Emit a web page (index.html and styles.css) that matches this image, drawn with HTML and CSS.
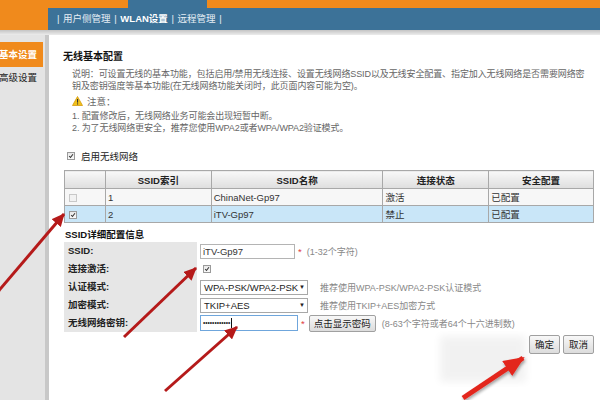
FILE: index.html
```
<!DOCTYPE html>
<html lang="zh-CN">

<head>
    <meta charset="UTF-8">
    <title>WLAN设置</title>
    <link rel="stylesheet" href="styles.css">
</head>

<body>
    <div class="header">
        <div class="logo"></div>
        <div class="nav">
            <div class="nav-top">
                <div class="strip first"></div>
                <div class="tab"></div>
                <div class="strip"></div>
            </div>
            <div class="nav-bar">
                | 用户侧管理 | <b>WLAN设置</b> | 远程管理 |
            </div>
        </div>
    </div>
    <div class="shade"></div>

    <div class="main">
        <ul class="sidebar">
            <li class="active"><span>无线基本设置</span></li>
            <li><span>无线高级设置</span></li>
        </ul>

        <div class="content">
            <h3 class="title">无线基本配置</h3>
            <p class="desc">说明：可设置无线的基本功能，包括启用/禁用无线连接、设置无线网络SSID以及无线安全配置、指定加入无线网络是否需要网络密<br>钥及密钥强度等基本功能(在无线网络功能关闭时，此页面内容可能为空)。</p>
            <div class="notice">
                <svg width="11" height="10" viewBox="0 0 11 10">
                    <path d="M5.5 0.5 L10.5 9.5 L0.5 9.5 Z" fill="#f2c21b" stroke="#d49a10" stroke-width="0.8"/>
                    <rect x="5" y="3" width="1.1" height="3.6" fill="#333"/>
                    <rect x="5" y="7.4" width="1.1" height="1.1" fill="#333"/>
                </svg>
                注意：
            </div>
            <p class="desc">1. 配置修改后，无线网络业务可能会出现短暂中断。<br>2. 为了无线网络更安全，推荐您使用WPA2或者WPA/WPA2验证模式。</p>

            <div class="enable">
                <span class="cb checked"><svg viewBox="0 0 8 8"><path d="M1.5 4 L3.3 6 L6.6 1.6" fill="none" stroke="#333" stroke-width="1.4"/></svg></span>
                启用无线网络
            </div>

            <table class="list">
                <tr>
                    <th class="c0"></th>
                    <th class="c1">SSID索引</th>
                    <th class="c2">SSID名称</th>
                    <th class="c3">连接状态</th>
                    <th class="c4">安全配置</th>
                </tr>
                <tr class="row">
                    <td class="chk"><span class="cb off"></span></td>
                    <td>1</td>
                    <td>ChinaNet-Gp97</td>
                    <td>激活</td>
                    <td>已配置</td>
                </tr>
                <tr class="row sel">
                    <td class="chk"><span class="cb checked"><svg viewBox="0 0 8 8"><path d="M1.5 4 L3.3 6 L6.6 1.6" fill="none" stroke="#333" stroke-width="1.4"/></svg></span></td>
                    <td>2</td>
                    <td>iTV-Gp97</td>
                    <td>禁止</td>
                    <td>已配置</td>
                </tr>
            </table>

            <h4 class="subtitle">SSID详细配置信息</h4>
            <div class="form">
                <div class="label">SSID:</div>
                <div class="value">
                    <span class="input">iTV-Gp97</span><span class="req">*</span><span class="hint">(1-32个字符)</span>
                </div>
                <div class="label">连接激活:</div>
                <div class="value">
                    <span class="cb checked"><svg viewBox="0 0 8 8"><path d="M1.5 4 L3.3 6 L6.6 1.6" fill="none" stroke="#333" stroke-width="1.4"/></svg></span>
                </div>
                <div class="label">认证模式:</div>
                <div class="value">
                    <span class="select">WPA-PSK/WPA2-PSK<i>▼</i></span><span class="hint wide">推荐使用WPA-PSK/WPA2-PSK认证模式</span>
                </div>
                <div class="label">加密模式:</div>
                <div class="value">
                    <span class="select">TKIP+AES<i>▼</i></span><span class="hint wide">推荐使用TKIP+AES加密方式</span>
                </div>
                <div class="label">无线网络密钥:</div>
                <div class="value">
                    <span class="input pwd">••••••••••••<em></em></span><span class="req">*</span><span class="btn">点击显示密码</span><span class="hint">(8-63个字符或者64个十六进制数)</span>
                </div>
            </div>

            <div class="actions">
                <span class="btn">确定</span>
                <span class="btn">取消</span>
            </div>
        </div>
    </div>

    <!-- 标注箭头 -->
    <svg class="marks" width="600" height="400" viewBox="0 0 600 400">
        <defs>
            <marker id="head" markerUnits="userSpaceOnUse" markerWidth="14" markerHeight="12" refX="12" refY="6" orient="auto">
                <path d="M0 0 L13 6 L0 12 Z" fill="#b51a1a"/>
            </marker>
            <marker id="head2" markerUnits="userSpaceOnUse" markerWidth="22" markerHeight="18" refX="19" refY="9" orient="auto">
                <path d="M0 0 L21 9 L0 18 Z" fill="#e3261f"/>
            </marker>
            <filter id="blur"><feGaussianBlur stdDeviation="4"/></filter>
            <filter id="sh"><feDropShadow dx="1" dy="2" stdDeviation="1.5" flood-opacity="0.35"/></filter>
        </defs>
        <rect x="440" y="336" width="86" height="46" fill="#000" opacity="0.05" filter="url(#blur)"/>
        <line x1="-4" y1="294" x2="64" y2="214" stroke="#b51a1a" stroke-width="3" marker-end="url(#head)"/>
        <line x1="124" y1="337" x2="196" y2="268" stroke="#b51a1a" stroke-width="3" marker-end="url(#head)"/>
        <line x1="165" y1="391" x2="237" y2="327" stroke="#b51a1a" stroke-width="3" marker-end="url(#head)"/>
        <line x1="463" y1="398" x2="523" y2="358" stroke="#e3261f" stroke-width="5" marker-end="url(#head2)" filter="url(#sh)"/>
    </svg>
</body>

</html>
```

FILE: styles.css
```
* {
    margin: 0;
    padding: 0;
    list-style-type: none;
    box-sizing: border-box;
}

body {
    width: 600px;
    height: 400px;
    overflow: hidden;
    position: relative;
    background: #fff;
    font-family: "Liberation Sans", "Noto Sans CJK SC", sans-serif;
    font-size: 9.5px;
    color: #333;
}

.header {
    display: flex;
    height: 30px;
    background: #f08a1c;
}

.logo {
    width: 48px;
}

.nav {
    flex: 1;
    display: flex;
    flex-direction: column;
}

.nav-top {
    display: flex;
    height: 8px;
}

.nav-top .strip {
    flex: 1;
    background: #f08a1c;
}

.nav-top .strip.first {
    flex: none;
    width: 80px;
}

.nav-top .tab {
    width: 79px;
    background: #3c7298;
}

.nav-bar {
    flex: 1;
    background: #3c7298;
    color: #e6eef5;
    padding-left: 9px;
    line-height: 22px;
    font-size: 9.5px;
    word-spacing: 1px;
}

.nav-bar b {
    color: #fff;
}

.shade {
    height: 5px;
    background: linear-gradient(#c4c4c4, #ececec);
}

.main {
    display: flex;
    height: 365px;
}

.sidebar {
    flex: none;
    width: 49px;
    background: #e4e4e4;
    border-right: 4px solid #c8c8c8;
    padding-top: 7px;
}

.sidebar li {
    display: flex;
    justify-content: flex-end;
    overflow: hidden;
    width: 43px;
    height: 22px;
    line-height: 22px;
    padding-right: 6px;
    white-space: nowrap;
    font-size: 9.5px;
    color: #222;
}

.sidebar li.active {
    height: 25px;
    line-height: 25px;
    background: #f08a1c;
    color: #fff;
    font-weight: bold;
}

.sidebar li span {
    flex: none;
}

.content {
    flex: 1;
    min-width: 0;
    padding: 15px 6px 0 14px;
}

.title {
    font-size: 10px;
    line-height: 14px;
    color: #111;
}

.desc {
    margin: 4px 0 0 9px;
    line-height: 12px;
    color: #666;
    white-space: nowrap;
    font-size: 9px;
    letter-spacing: -0.1px;
}

.notice {
    display: flex;
    align-items: center;
    gap: 4px;
    margin: 2px 0 0 9px;
    height: 14px;
    color: #666;
}

.notice + .desc {
    margin-top: 2px;
}

.enable {
    display: flex;
    align-items: center;
    gap: 6px;
    margin: 15px 0 0 4px;
    height: 14px;
    color: #222;
}

.cb {
    display: inline-block;
    width: 8px;
    height: 8px;
    border: 1px solid #9a9a9a;
    background: linear-gradient(#e8e8e8, #fafafa);
    vertical-align: middle;
}

.cb svg {
    display: block;
    width: 6px;
    height: 6px;
}

.cb.off {
    border-color: #c8c8c8;
    background: #f2f2f2;
}

.list {
    margin: 7px 0 0 1px;
    width: 530px;
    border-collapse: collapse;
    font-size: 9.5px;
}

.list th,
.list td {
    border: 1px solid #a8a8a8;
}

.list th {
    height: 18px;
    background: linear-gradient(#f8f8f8, #dedede);
    color: #222;
}

.c0 { width: 41px; }
.c1 { width: 106px; }
.c2 { width: 172px; }
.c3 { width: 106px; }
.c4 { width: 105px; }

.list td {
    height: 17px;
    padding-left: 2px;
    color: #333;
}

.list .row {
    background: #f7f7f7;
}

.list .row.sel {
    background: #c9e6f8;
}

.list td.chk {
    padding-left: 4px;
}

.subtitle {
    margin: 5px 0 0 2px;
    font-size: 9.5px;
    line-height: 14px;
    color: #111;
}

.form {
    display: grid;
    grid-template-columns: 133px 1fr;
    grid-auto-rows: 18px;
    column-gap: 3px;
    margin-left: 1px;
}

.label {
    background: #e6e6e6;
    padding-left: 4px;
    line-height: 18px;
    font-weight: bold;
    color: #222;
}

.value {
    display: flex;
    align-items: center;
    white-space: nowrap;
}

.value .cb {
    margin-left: 3px;
}

.input {
    display: inline-block;
    width: 95px;
    height: 15px;
    line-height: 13px;
    border: 1px solid #b4b4b4;
    padding-left: 2px;
    background: #fff;
    color: #333;
}

.input.pwd {
    width: 98px;
    height: 16px;
    border-color: #6fa6dc;
    font-size: 6.5px;
    line-height: 14px;
    letter-spacing: 0;
    color: #222;
}

.input.pwd em {
    display: inline-block;
    width: 1px;
    height: 10px;
    background: #111;
    vertical-align: middle;
    margin-left: 1px;
}

.req {
    color: #e04040;
    margin: 0 4px 0 3px;
}

.hint {
    color: #888;
    margin-left: 1px;
    font-size: 9px;
}

.hint.wide {
    margin-left: 12px;
}

.select {
    position: relative;
    display: inline-block;
    width: 108px;
    height: 15px;
    line-height: 13px;
    border: 1px solid #a8a8a8;
    padding-left: 3px;
    background: #fff;
    color: #222;
}

.select i {
    position: absolute;
    right: 2px;
    top: 0;
    font-style: normal;
    font-size: 6px;
    color: #222;
}

.btn {
    display: inline-block;
    height: 17px;
    line-height: 15px;
    padding: 0 4px;
    border: 1px solid #a0a0a0;
    border-radius: 2px;
    background: linear-gradient(#f8f8f8, #dcdcdc);
    color: #222;
    margin-right: 5px;
}

.actions {
    display: flex;
    justify-content: flex-end;
    gap: 3px;
    margin-top: 3px;
}

.actions .btn {
    height: 19px;
    line-height: 17px;
    margin: 0;
    padding: 0 5px;
}

.marks {
    position: absolute;
    left: 0;
    top: 0;
    pointer-events: none;
}
```
